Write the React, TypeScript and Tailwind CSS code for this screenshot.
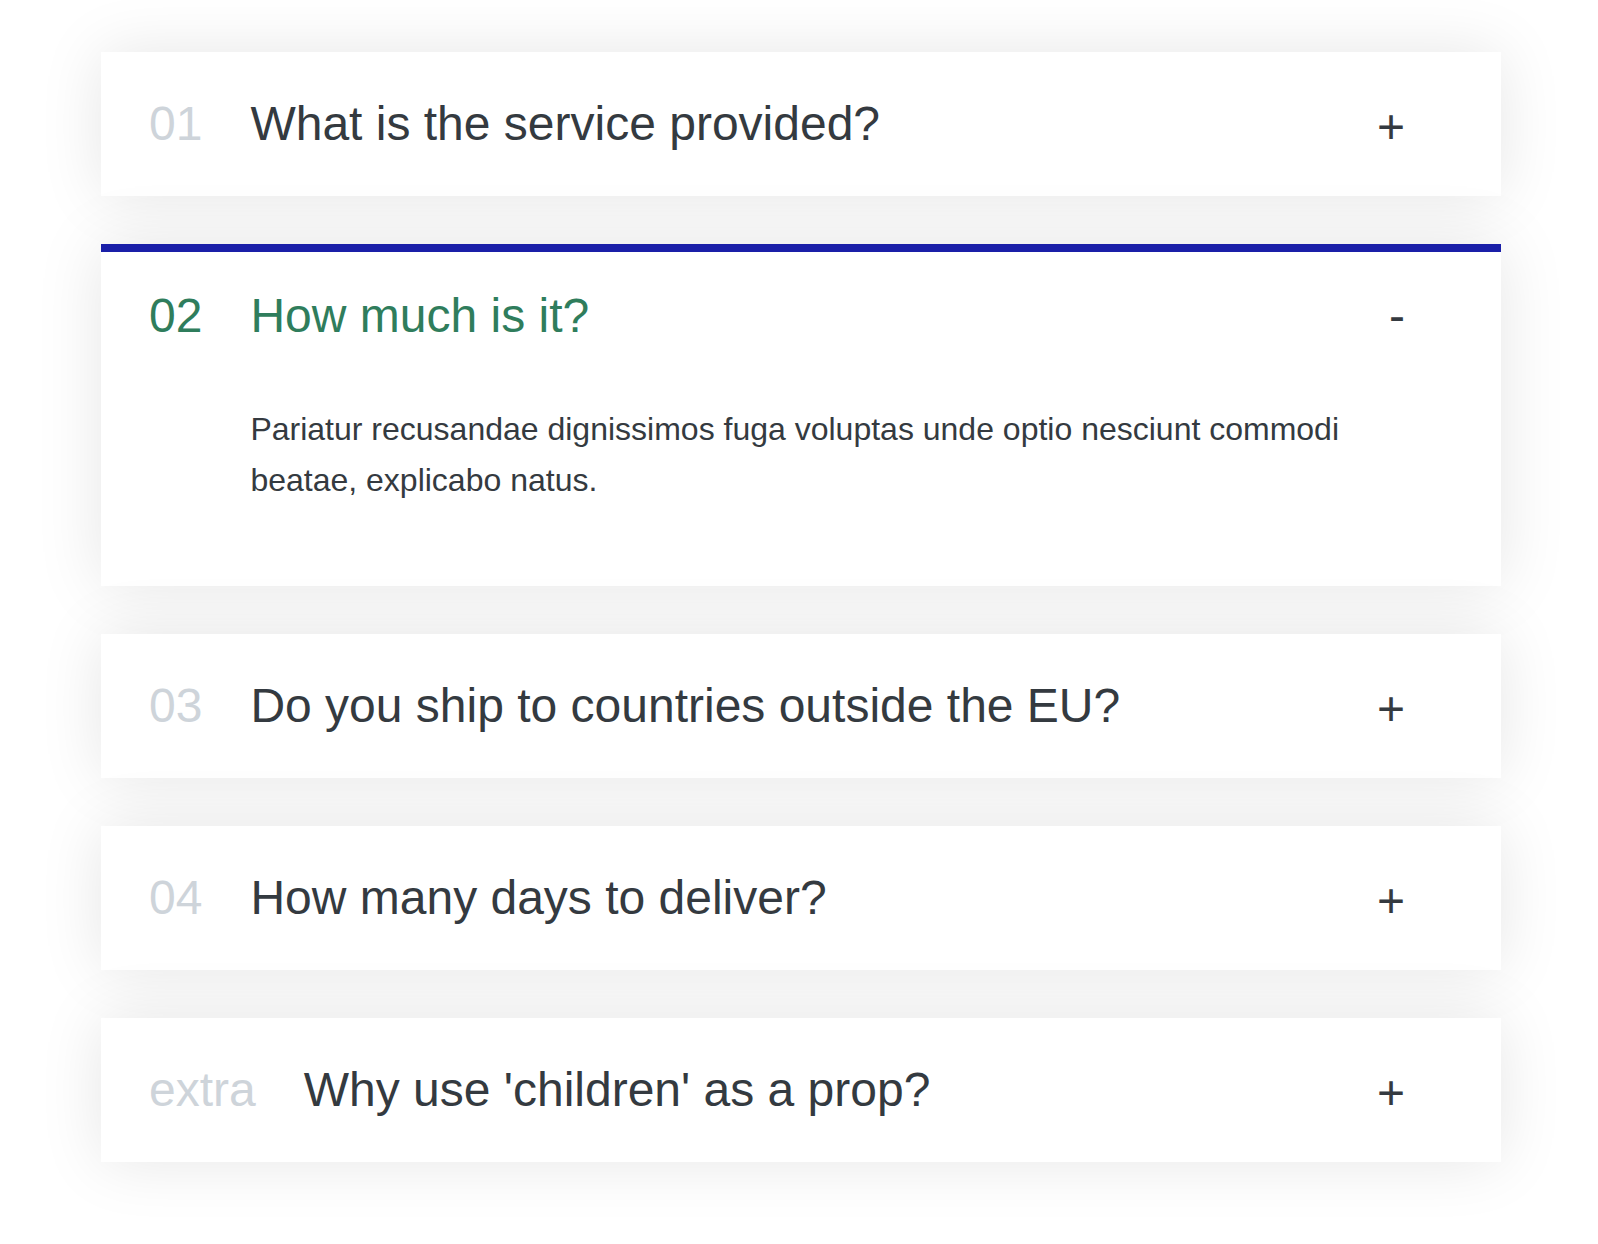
import React, { useState } from "react";

interface Faq {
  title: string;
  text: string;
}

const faqs: Faq[] = [
  {
    title: "What is the service provided?",
    text: "Lorem ipsum dolor sit amet consectetur, adipisicing elit. Accusantium, quaerat temporibus quas dolore provident nisi ut aliquid ratione beatae sequi aspernatur veniam repellendus.",
  },
  {
    title: "How much is it?",
    text: "Pariatur recusandae dignissimos fuga voluptas unde optio nesciunt commodi beatae, explicabo natus.",
  },
  {
    title: "Do you ship to countries outside the EU?",
    text: "Excepturi velit laborum, perspiciatis nemo perferendis reiciendis aliquam possimus dolor sed! Dolore laborum ducimus veritatis facere molestias!",
  },
  {
    title: "How many days to deliver?",
    text: "Aliquid ipsum nobis nemo harum, fugit eligendi odio, deleniti doloribus dolores quas.",
  },
];

interface ItemProps {
  num: string;
  title: string;
  curOpen: number | null;
  onOpen: (n: number | null) => void;
  index: number;
  children: React.ReactNode;
}

const AccordionItem: React.FC<ItemProps> = ({
  num,
  title,
  curOpen,
  onOpen,
  index,
  children,
}) => {
  const isOpen = curOpen === index;

  return (
    <div
      onClick={() => onOpen(isOpen ? null : index)}
      className={`grid cursor-pointer grid-cols-[auto_1fr_auto] items-center gap-x-12 gap-y-16 border-y-8 border-b-white bg-white py-10 pl-12 pr-24 shadow-[0_0_64px_rgba(0,0,0,0.1)] ${
        isOpen ? "border-t-[#1a1fa8]" : "border-t-white"
      }`}
    >
      <p
        className={`text-[48px] leading-[48px] ${
          isOpen ? "text-[#2f7d5c]" : "text-[#ced4da]"
        }`}
      >
        {num}
      </p>
      <p
        className={`text-[48px] leading-[48px] ${
          isOpen ? "text-[#2f7d5c]" : "text-[#343a40]"
        }`}
      >
        {title}
      </p>
      {/* the plus sits a little lower than the minus */}
      <p
        className={`text-[48px] leading-[48px] text-[#343a40] ${
          isOpen ? "" : "translate-y-[3px]"
        }`}
      >
        {isOpen ? "-" : "+"}
      </p>
      {isOpen && (
        <div className="col-start-2 col-end-4 pb-8 text-[32px] leading-[1.6] text-[#343a40]">
          {children}
        </div>
      )}
    </div>
  );
};

export default function App() {
  const [curOpen, setCurOpen] = useState<number | null>(1);

  return (
    <div
      className="min-h-screen bg-white pl-1 pt-[52px]"
      style={{ fontFamily: '"Liberation Sans", Arial, sans-serif' }}
    >
      <div className="mx-auto flex w-[1400px] flex-col gap-12">
        {faqs.map((el, i) => (
          <AccordionItem
            key={el.title}
            num={i < 9 ? `0${i + 1}` : `${i + 1}`}
            title={el.title}
            curOpen={curOpen}
            onOpen={setCurOpen}
            index={i}
          >
            {el.text}
          </AccordionItem>
        ))}
        <AccordionItem
          num="extra"
          title="Why use 'children' as a prop?"
          curOpen={curOpen}
          onOpen={setCurOpen}
          index={22}
        >
          <p>Allows the accordion to be reused with any content.</p>
        </AccordionItem>
      </div>
    </div>
  );
}
